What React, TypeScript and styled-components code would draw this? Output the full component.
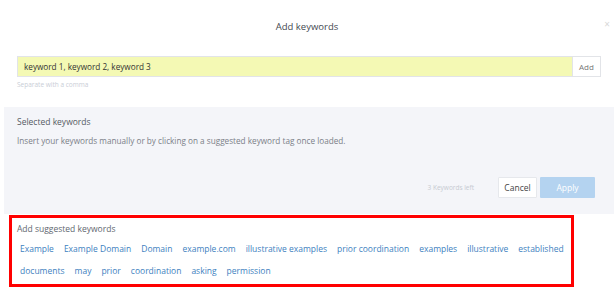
import React from "react";
import styled, { createGlobalStyle } from "styled-components";

const GlobalStyle = createGlobalStyle`
  html, body {
    margin: 0;
    padding: 0;
    background: #ffffff;
    font-family: "Open Sans", "Noto Sans", sans-serif;
  }
`;

const Dialog = styled.div`
  width: 614px;
  height: 296px;
  overflow: hidden;
  display: flex;
  flex-direction: column;
`;

const Header = styled.header`
  display: grid;
  grid-template-columns: 1fr auto 1fr;
  align-items: center;
  height: 50px;
  padding-top: 2px;
  box-sizing: border-box;
`;

const Title = styled.h1`
  grid-column: 2;
  margin: 0;
  font-size: 9.5px;
  font-weight: 400;
  color: #444a52;
`;

const CloseButton = styled.button`
  justify-self: end;
  border: none;
  background: none;
  padding: 0 4px 0 0;
  font-family: inherit;
  font-size: 10px;
  line-height: 1;
  color: #d8d8d8;
  margin-top: -4px;
`;

const InputSection = styled.div`
  padding: 6px 13px 0 17px;
  height: 57px;
  box-sizing: border-box;
`;

const InputRow = styled.div`
  display: flex;
  height: 21px;
  border: 1px solid #e2e4e8;
  box-sizing: border-box;
`;

const KeywordInput = styled.input`
  flex: 1;
  min-width: 0;
  border: none;
  outline: none;
  background: #f4f9b4;
  padding: 0 6px;
  font-family: inherit;
  font-size: 8.2px;
  color: #333;
`;

const AddButton = styled.button`
  width: 28px;
  border: none;
  border-left: 1px solid #e2e4e8;
  background: #fff;
  padding: 0;
  font-family: inherit;
  font-size: 8px;
  color: #777;
`;

const Hint = styled.div`
  margin-top: 3px;
  font-size: 6.5px;
  color: #c9ced6;
`;

const SelectedPanel = styled.section`
  margin-left: 4px;
  height: 107px;
  background: #f4f5f9;
  padding: 9px 13px 0 13px;
  box-sizing: border-box;
  display: flex;
  flex-direction: column;
`;

const SectionLabel = styled.h2`
  margin: 0;
  font-size: 8.5px;
  font-weight: 400;
  color: #555b63;
`;

const PanelText = styled.p`
  margin: 8px 0 0;
  font-size: 8.2px;
  color: #7b8088;
`;

const Actions = styled.div`
  margin-top: auto;
  margin-bottom: 16px;
  display: flex;
  align-items: center;
  justify-content: flex-end;
  gap: 3px;
  padding-right: 6px;
`;

const LeftCount = styled.span`
  font-size: 6.5px;
  color: #c6cad1;
  margin-right: 21px;
`;

const ActionButton = styled.button<{ $primary?: boolean }>`
  height: 21px;
  width: ${(p) => (p.$primary ? "55px" : "39px")};
  border: ${(p) => (p.$primary ? "none" : "1px solid #e6e8ec")};
  background: ${(p) => (p.$primary ? "#b4d3f0" : "#ffffff")};
  color: ${(p) => (p.$primary ? "#ffffff" : "#444")};
  font-family: inherit;
  font-size: 8.5px;
  padding: 0;
  border-radius: 1px;
`;

const SuggestedBox = styled.section`
  margin: 1px 0 0 9px;
  width: 565px;
  height: 72px;
  border: 3px solid #ff0000;
  box-sizing: border-box;
  padding: 5px 5px 0 5px;
`;

const SuggestedLabel = styled(SectionLabel)`
  color: #626870;
`;

const TagList = styled.div`
  display: flex;
  flex-wrap: wrap;
  column-gap: 10px;
  row-gap: 0;
  padding: 4px 0 0 3px;
`;

const Tag = styled.span`
  font-size: 8.5px;
  line-height: 22px;
  color: #3e7fc0;
  cursor: pointer;
`;

const suggestions = [
  "Example",
  "Example Domain",
  "Domain",
  "example.com",
  "illustrative examples",
  "prior coordination",
  "examples",
  "illustrative",
  "established",
  "documents",
  "may",
  "prior",
  "coordination",
  "asking",
  "permission",
];

export default function App() {
  return (
    <>
      <GlobalStyle />
      <Dialog>
        <Header>
          <Title>Add keywords</Title>
          <CloseButton>×</CloseButton>
        </Header>
        <InputSection>
          <InputRow>
            <KeywordInput defaultValue="keyword 1, keyword 2, keyword 3" />
            <AddButton>Add</AddButton>
          </InputRow>
          <Hint>Separate with a comma</Hint>
        </InputSection>
        <SelectedPanel>
          <SectionLabel>Selected keywords</SectionLabel>
          <PanelText>
            Insert your keywords manually or by clicking on a suggested keyword
            tag once loaded.
          </PanelText>
          <Actions>
            <LeftCount>3 Keywords left</LeftCount>
            <ActionButton>Cancel</ActionButton>
            <ActionButton $primary>Apply</ActionButton>
          </Actions>
        </SelectedPanel>
        <SuggestedBox>
          <SuggestedLabel>Add suggested keywords</SuggestedLabel>
          <TagList>
            {suggestions.map((s) => (
              <Tag key={s}>{s}</Tag>
            ))}
          </TagList>
        </SuggestedBox>
      </Dialog>
    </>
  );
}
